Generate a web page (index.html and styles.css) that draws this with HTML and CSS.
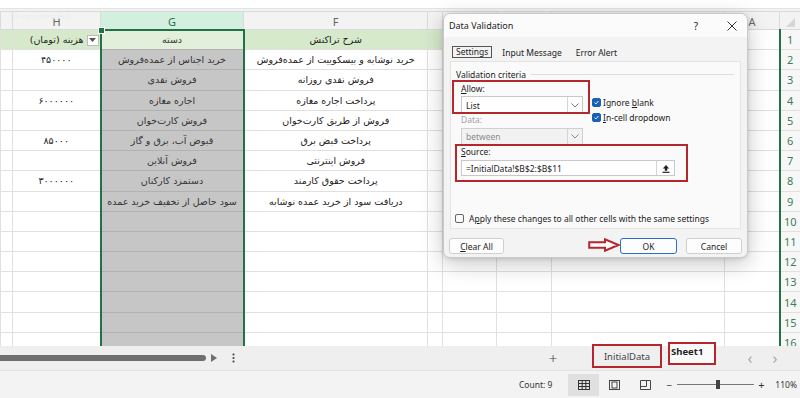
FILE: index.html
```html
<!DOCTYPE html>
<html lang="en">
<head>
<meta charset="utf-8">
<title>Data Validation</title>
<link rel="stylesheet" href="styles.css">
</head>
<body>
<div class="app">
  <div class="formulabar"></div>
  <div class="sheet">
    <div class="watermark">© anzalweb.ir</div>
    <table class="grid">
      <colgroup>
        <col class="w-i"><col class="w-h"><col class="w-g"><col class="w-f"><col class="w-e"><col class="w-d"><col class="w-c"><col class="w-b"><col class="w-a"><col class="w-rh">
      </colgroup>
      <tr class="colhead"><th></th><th>H</th><th class="sel">G</th><th>F</th><th></th><th></th><th></th><th></th><th>A</th><th class="corner"><span class="tri"></span></th></tr>
      <tr><td class="fill"></td><td class="fill fa hcell"><span class="flt"><svg width="7" height="4" viewBox="0 0 7 4"><path d="M0 0h7L3.5 4z" fill="#555"/></svg></span>هزینه (تومان)</td><td class="g active fa">دسته</td><td class="fill fa">شرح تراکنش</td><td class="fill"></td><td class="fill"></td><td></td><td></td><td></td><td class="rh">1</td></tr>
      <tr><td></td><td class="fa">۴۵۰۰۰۰</td><td class="g fa">خرید اجناس از عمده‌فروش</td><td class="fa">خرید نوشابه و بیسکوییت از عمده‌فروش</td><td></td><td></td><td></td><td></td><td></td><td class="rh">2</td></tr>
      <tr><td></td><td></td><td class="g fa">فروش نقدی</td><td class="fa">فروش نقدی روزانه</td><td></td><td></td><td></td><td></td><td></td><td class="rh">3</td></tr>
      <tr><td></td><td class="fa">۶۰۰۰۰۰۰</td><td class="g fa">اجاره مغازه</td><td class="fa">پرداخت اجاره مغازه</td><td></td><td></td><td></td><td></td><td></td><td class="rh">4</td></tr>
      <tr><td></td><td></td><td class="g fa">فروش کارت‌خوان</td><td class="fa">فروش از طریق کارت‌خوان</td><td></td><td></td><td></td><td></td><td></td><td class="rh">5</td></tr>
      <tr><td></td><td class="fa">۸۵۰۰۰</td><td class="g fa">قبوض آب، برق و گاز</td><td class="fa">پرداخت قبض برق</td><td></td><td></td><td></td><td></td><td></td><td class="rh">6</td></tr>
      <tr><td></td><td></td><td class="g fa">فروش آنلاین</td><td class="fa">فروش اینترنتی</td><td></td><td></td><td></td><td></td><td></td><td class="rh">7</td></tr>
      <tr><td></td><td class="fa">۳۰۰۰۰۰۰</td><td class="g fa">دستمزد کارکنان</td><td class="fa">پرداخت حقوق کارمند</td><td></td><td></td><td></td><td></td><td></td><td class="rh">8</td></tr>
      <tr><td></td><td></td><td class="g fa">سود حاصل از تخفیف خرید عمده</td><td class="fa">دریافت سود از خرید عمده نوشابه</td><td></td><td></td><td></td><td></td><td></td><td class="rh">9</td></tr>
      <tr><td></td><td></td><td class="g"></td><td></td><td></td><td></td><td></td><td></td><td></td><td class="rh">10</td></tr>
      <tr><td></td><td></td><td class="g"></td><td></td><td></td><td></td><td></td><td></td><td></td><td class="rh">11</td></tr>
      <tr><td></td><td></td><td class="g"></td><td></td><td></td><td></td><td></td><td></td><td></td><td class="rh">12</td></tr>
      <tr><td></td><td></td><td class="g"></td><td></td><td></td><td></td><td></td><td></td><td></td><td class="rh">13</td></tr>
      <tr><td></td><td></td><td class="g"></td><td></td><td></td><td></td><td></td><td></td><td></td><td class="rh">14</td></tr>
      <tr><td></td><td></td><td class="g"></td><td></td><td></td><td></td><td></td><td></td><td></td><td class="rh">15</td></tr>
      <tr><td></td><td></td><td class="g"></td><td></td><td></td><td></td><td></td><td></td><td></td><td class="rh">16</td></tr>
    </table>
  </div>

  <div class="tabbar">
    <div class="hthumb"></div>
    <svg class="harrow" width="6" height="8" viewBox="0 0 6 8"><path d="M0 0L6 4L0 8z" fill="#6f6f6f"/></svg>
    <svg class="vdots" width="3" height="10" viewBox="0 0 3 10"><circle cx="1.5" cy="1.5" r="1.1" fill="#444"/><circle cx="1.5" cy="5" r="1.1" fill="#444"/><circle cx="1.5" cy="8.5" r="1.1" fill="#444"/></svg>
    <div class="spacer"></div>
    <div class="addsheet">+</div>
    <div class="stab tab-initial">InitialData</div>
    <div class="stab tab-sheet1">Sheet1</div>
    <div class="nav">&lsaquo;</div>
    <div class="nav">&rsaquo;</div>
  </div>

  <div class="statusbar">
    <span class="count">Count: 9</span>
    <span class="view on"><svg width="12" height="10" viewBox="0 0 12 10"><rect x="0.5" y="0.5" width="11" height="9" fill="none" stroke="#333"/><path d="M0.5 3.5H11.5M0.5 6.5H11.5M4.2 0.5V9.5M7.8 0.5V9.5" stroke="#333"/></svg></span>
    <span class="view"><svg width="11" height="10" viewBox="0 0 11 10"><rect x="0.5" y="0.5" width="10" height="9" fill="none" stroke="#444"/><rect x="3" y="2" width="5" height="6" fill="none" stroke="#444"/></svg></span>
    <span class="view"><svg width="11" height="10" viewBox="0 0 11 10"><path d="M0.5 0.5H10.5V9.5H0.5Z" fill="none" stroke="#444"/><path d="M0.5 6.5H6.5V0.5" fill="none" stroke="#444"/></svg></span>
    <span class="zminus">−</span>
    <span class="slider"><span class="thumb"></span></span>
    <span class="zplus">+</span>
    <span class="zoom">110%</span>
  </div>
</div>

<div class="dialog">
  <div class="dlg-title">
    <span class="dlg-name">Data Validation</span>
    <span class="help">?</span>
    <span class="close"><svg width="10" height="10" viewBox="0 0 10 10"><path d="M0.5 0.5L9.5 9.5M9.5 0.5L0.5 9.5" stroke="#333" stroke-width="1"/></svg></span>
  </div>
  <div class="tabs">
    <span class="tab cur">Settings</span>
    <span class="tab">Input Message</span>
    <span class="tab">Error Alert</span>
  </div>
  <div class="panel">
    <div class="legend"><span>Validation criteria</span><span class="rule"></span></div>
    <div class="form">
      <div class="leftcol">
        <div class="lbl"><u>A</u>llow:</div>
        <div class="select"><span class="val">List</span><span class="chev"><svg width="8" height="5" viewBox="0 0 8 5"><path d="M0.5 0.5L4 4L7.5 0.5" fill="none" stroke="#777"/></svg></span></div>
        <div class="lbl dim">Data:</div>
        <div class="select disabled"><span class="val">between</span><span class="chev"><svg width="8" height="5" viewBox="0 0 8 5"><path d="M0.5 0.5L4 4L7.5 0.5" fill="none" stroke="#888"/></svg></span></div>
      </div>
      <div class="rightcol">
        <div class="chk"><span class="box on"><svg width="9" height="9" viewBox="0 0 9 9"><path d="M2 4.6L3.8 6.3L7 2.6" fill="none" stroke="#fff" stroke-width="1.2"/></svg></span><span>Ignore <u>b</u>lank</span></div>
        <div class="chk"><span class="box on"><svg width="9" height="9" viewBox="0 0 9 9"><path d="M2 4.6L3.8 6.3L7 2.6" fill="none" stroke="#fff" stroke-width="1.2"/></svg></span><span><u>I</u>n-cell dropdown</span></div>
      </div>
    </div>
    <div class="source">
      <div class="lbl"><u>S</u>ource:</div>
      <div class="input"><span class="val">=InitialData!$B$2:$B$11</span><span class="pick"><svg width="8" height="9" viewBox="0 0 8 9"><path d="M4 1L7.2 4.4H5.2V6.8H2.8V4.4H0.8Z" fill="#222"/><path d="M0.5 8.3H7.5" stroke="#222" stroke-width="1.2"/></svg></span></div>
    </div>
    <div class="chk apply"><span class="box"></span><span>A<u>p</u>ply these changes to all other cells with the same settings</span></div>
  </div>
  <div class="buttons">
    <span class="btn clear"><span><u>C</u>lear All</span></span>
    <span class="btn ok">OK</span>
    <span class="btn cancel">Cancel</span>
  </div>
  <div class="mark mark-allow"></div>
  <div class="mark mark-source"></div>
  <svg class="arrow" width="32" height="14" viewBox="0 0 32 14"><path d="M1.2 4.2H17V1.3L30.5 7L17 12.7V9.8H1.2Z" fill="#fff" stroke="#b5262d" stroke-width="2" stroke-linejoin="miter"/></svg>
</div>
</body>
</html>
```
FILE: styles.css
```css
* { box-sizing: border-box; margin: 0; padding: 0; }
html, body { width: 800px; height: 398px; overflow: hidden; background: #fff; }
body { position: relative; font-family: "Noto Sans", "Open Sans", sans-serif; color: #222; }

.app { display: flex; flex-direction: column; height: 398px; }
.formulabar { height: 11px; flex: none; background: linear-gradient(#fff 0 8px, #e4e4e4 8px 9px, #f2f2f2 9px); }

.sheet { height: 335px; flex: none; overflow: hidden; position: relative; }
.watermark { position: absolute; left: 11px; top: 0; font-size: 9.5px; line-height: 10px; color: rgba(255,255,255,0.9); text-shadow: 0 0 1px rgba(0,0,0,0.15); z-index: 2; }

.grid { border-collapse: collapse; table-layout: fixed; width: 800px; }
.w-i { width: 12px; } .w-h { width: 88px; } .w-g { width: 143px; } .w-f { width: 184px; }
.w-e { width: 15px; } .w-d { width: 54px; } .w-c { width: 55px; } .w-b { width: 173px; }
.w-a { width: 55px; } .w-rh { width: 21px; }
.grid tr { height: 20.2px; }
.grid td, .grid th { border: 1px solid #e0e0e0; padding: 0; overflow: hidden; white-space: nowrap; text-align: center; vertical-align: middle; }
.grid td { font-size: 9.5px; color: #222; }
.grid .fa { font-family: "DejaVu Sans", sans-serif; direction: rtl; }
.grid tr.colhead { height: 18px; }
.grid th { background: #f3f3f3; border-color: #dadada; color: #666; font-weight: normal; font-size: 11px; padding-top: 3px; line-height: 12px; }
.grid th.sel { background: #d3efdf; color: #2b6e48; }
.grid th.corner { position: relative; }
.tri { position: absolute; left: 6px; bottom: 2px; width: 0; height: 0; border-right: 9px solid #d6d6d6; border-top: 9px solid transparent; }

.grid td.fill { background: #d6eacb; }
.grid td.hcell { text-align: right; padding-right: 1px; }
.flt { display: inline-flex; align-items: center; justify-content: center; width: 12px; height: 11px; background: #fff; border: 1px solid #bdbdbd; vertical-align: middle; margin-left: 3px; }
.grid td.g { background: #c6c6c6; border-left: 2px solid #217346; border-right: 2px solid #217346; border-bottom-color: #b2b2b2; color: #333; }
.grid td.g.active { background: #e2efda; border-top: 2px solid #217346; position: relative; overflow: visible; }
.grid td.g.active::before { content: ""; position: absolute; left: -4px; top: -4px; width: 5px; height: 5px; background: #217346; border: 1px solid #fff; }
.grid td.rh { background: #f7f7f7; color: #3b7d57; font-family: "Noto Sans", sans-serif; font-size: 11px; border-left: 2px solid #217346; }

/* tab bar */
.tabbar { height: 24px; flex: none; background: #efefef; display: flex; align-items: center; }
.hthumb { width: 206px; height: 6px; background: #6f6f6f; border-radius: 0 3px 3px 0; }
.harrow { margin-left: 5px; }
.vdots { margin-left: 15px; }
.spacer { flex: 1; }
.addsheet { width: 16px; text-align: center; font-size: 15px; line-height: 16px; color: #444; font-weight: 300; }
.stab { align-self: flex-start; border: 2.5px solid #b5262d; font-size: 9.5px; color: #444; }
.tab-initial { margin-left: 31px; margin-top: -2px; width: 70px; height: 24px; display: flex; align-items: center; justify-content: center; }
.tab-sheet1 { margin-left: 6px; margin-top: -4px; width: 48px; height: 23px; background: #fafafa; font-weight: bold; color: #222; padding: 2px 0 0 1px; line-height: 12px; }
.nav { width: 20px; text-align: center; color: #aaa; font-size: 16px; line-height: 16px; }
.tab-sheet1 + .nav { margin-left: 24px; }
.nav + .nav { margin-left: 5px; margin-right: 15px; }

/* status bar */
.statusbar { height: 28px; flex: none; background: #f3f3f3; border-top: 1px solid #e2e2e2; display: flex; align-items: center; justify-content: flex-end; padding-right: 3px; font-size: 8.5px; color: #333; }
.count { margin-right: 16px; }
.view { width: 31px; height: 22px; display: flex; align-items: center; justify-content: center; }
.view.on { background: #e0e0e0; }
.zminus { margin-left: 5px; width: 6px; font-size: 10px; text-align: center; }
.slider { margin-left: 5px; width: 77px; height: 1px; background: #777; position: relative; }
.thumb { position: absolute; left: 39px; top: -4px; width: 4px; height: 9px; background: #444; }
.zplus { margin-left: 4px; width: 6px; font-size: 11px; text-align: center; }
.zoom { margin-left: 11px; }

/* dialog */
.dialog { position: absolute; left: 443px; top: 13px; width: 305px; height: 245px; background: #f3f3f3; border: 1px solid #c9c9c9; border-radius: 7px; box-shadow: 0 6px 22px rgba(0,0,0,0.22), 0 1px 4px rgba(0,0,0,0.12); display: flex; flex-direction: column; font-size: 8.5px; color: #1b1b1b; }
.dlg-title { height: 23px; flex: none; display: flex; align-items: center; padding-left: 5px; background: #fbfbfb; border-radius: 7px 7px 0 0; }
.dlg-name { font-size: 9px; }
.help { margin-left: auto; width: 20px; text-align: center; font-size: 10px; margin-right: 11px; }
.close { width: 30px; display: flex; justify-content: center; }
.tabs { margin-top: 9px; height: 12px; display: flex; align-items: center; padding-left: 8px; }
.tab { margin-right: 14px; }
.tab.cur { border: 1px solid #555; padding: 0 3px; height: 12px; line-height: 10px; margin-right: 10px; }
.panel { margin: 3px 0 0 6px; width: 291px; height: 168px; background: #fafafa; border: 1px solid #e4e4e4; flex: none; }
.legend { margin: 6px 6px 0 5px; height: 12px; display: flex; align-items: center; }
.rule { flex: 1; height: 1px; background: #dedede; margin-left: 5px; }
.form { display: flex; margin: 4px 0 0 10px; }
.leftcol { width: 122px; }
.lbl { height: 10px; line-height: 10px; }
.lbl.dim { color: #a3a3a3; margin-top: 1px; }
.select { margin-top: 2px; height: 18px; display: flex; background: #fff; border: 1px solid #c8c8c8; }
.select .val { flex: 1; padding-left: 4px; display: flex; align-items: center; }
.select .chev { width: 15px; border-left: 1px solid #d4d4d4; display: flex; align-items: center; justify-content: center; }
.select.disabled { margin-top: 3px; height: 17px; background: #f2f2f2; color: #8c8c8c; border-color: #d0d0d0; }
.rightcol { margin-left: 9px; padding-top: 14px; display: flex; flex-direction: column; gap: 6px; }
.chk { display: flex; align-items: center; height: 9px; white-space: nowrap; }
.box { width: 9px; height: 9px; border-radius: 2px; border: 1px solid #555; margin-right: 2px; display: flex; align-items: center; justify-content: center; flex: none; }
.box.on { background: #1761b6; border-color: #1761b6; }
.box.on svg { display: block; }
.source { margin: 2px 0 0 10px; }
.input { margin-top: 3px; width: 214px; height: 16px; background: #fff; border: 1px solid #c8c8c8; display: flex; }
.input .val { flex: 1; padding-left: 4px; display: flex; align-items: center; }
.input .pick { width: 18px; border-left: 1px solid #d4d4d4; display: flex; align-items: center; justify-content: center; }
.apply { margin: 38px 0 0 4px; }
.apply .box { margin-right: 5px; border-color: #666; border-radius: 2px; }
.buttons { margin-top: 9px; height: 16px; display: flex; padding-left: 5px; }
.btn { height: 16px; display: flex; align-items: center; justify-content: center; background: #fdfdfd; border: 1px solid #cfcfcf; border-radius: 3px; }
.clear { width: 55px; }
.ok { width: 57px; margin-left: 116px; border: 1px solid #2a6fc1; }
.cancel { width: 56px; margin-left: 9px; }
.mark { position: absolute; border: 2.5px solid #b5262d; }
.mark-allow { left: 8px; top: 66px; width: 138px; height: 34px; }
.mark-source { left: 11px; top: 130px; width: 233px; height: 38px; }
.arrow { position: absolute; left: 144px; top: 224px; }
```
